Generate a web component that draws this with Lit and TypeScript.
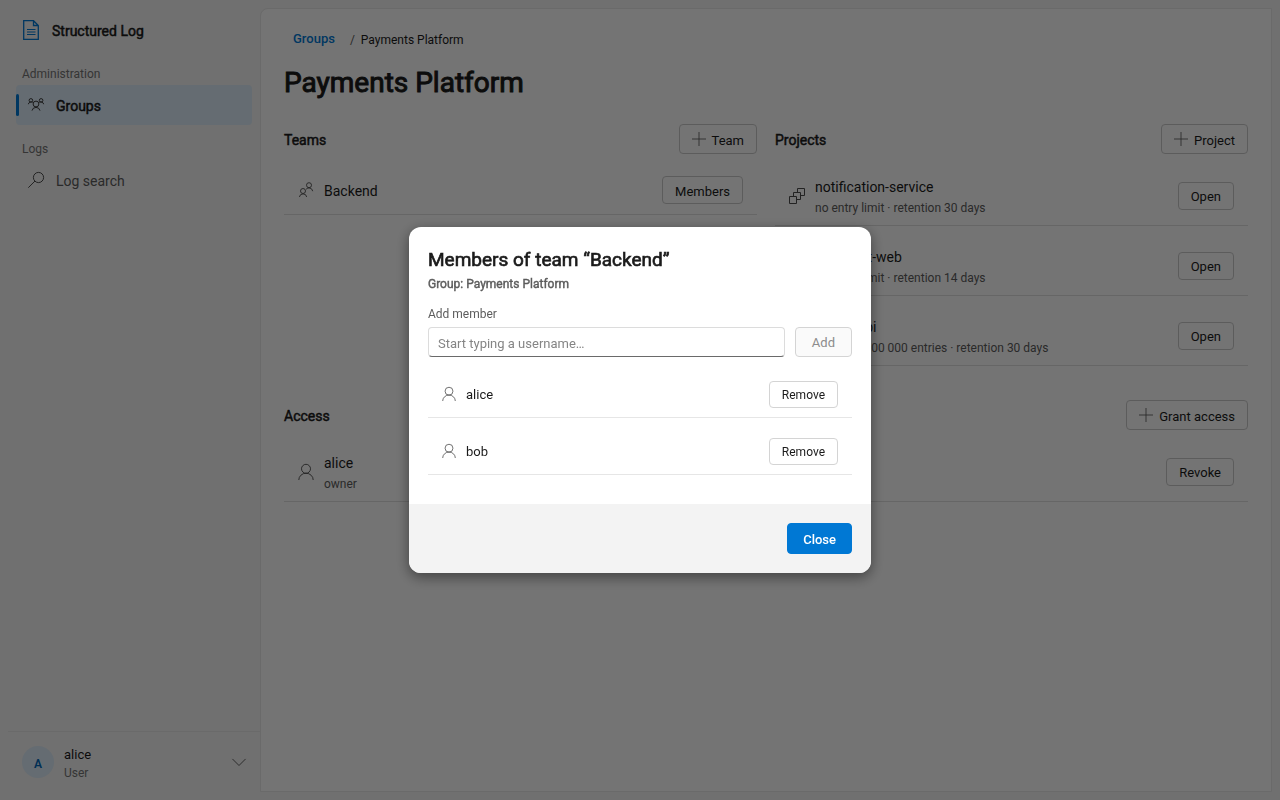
import { LitElement, html, css, svg, nothing } from "lit";
import { customElement, state } from "lit/decorators.js";

const line = (size: number, body: unknown) =>
  html`<svg width=${size} height=${size} viewBox="0 0 16 16" fill="none" stroke="currentColor" stroke-width="0.9" aria-hidden="true">${body}</svg>`;

const person = (size: number) =>
  line(size, svg`<circle cx="8" cy="4.800" r="4.500"/><path d="M.8 16a7.200 6.800 0 0 1 14.400 0"/>`);
const plus = () => line(14, svg`<path d="M8 0v16M0 8h16"/>`);
const people = () =>
  line(16, svg`<circle cx="11" cy="3.200" r="2.500"/><circle cx="5" cy="9" r="2.500"/><path d="M1.400 15a3.700 3.700 0 0 1 7.300 0M8.100 7.200a3.800 3.800 0 0 1 6.600 2"/>`);
const group = () =>
  line(16, svg`<g stroke-width="1"><circle cx="8" cy="7" r="2.900"/><path d="M4 13.600a4.100 4.100 0 0 1 8 0M.4 7.200a2.600 2.600 0 0 1 4.200-1.800M15.600 7.200a2.600 2.600 0 0 0-4.200-1.800"/><circle cx="2.900" cy="3.400" r="1.800"/><circle cx="13.100" cy="3.400" r="1.800"/></g>`);
const search = () => line(16, svg`<circle cx="10.500" cy="5.500" r="5.100"/><path d="M7 9L.3 15.700"/>`);
const blocks = () =>
  line(16, svg`<path stroke-width="1" d="M.5 8.500h7v7h-7zM4.500 8.500v-4h7v7h-4M8.500 4.500v-4h7v7h-4"/>`);
const chevron = () => line(14, svg`<path d="M.5 4.500L8 12l7.500-7.500"/>`);
const documentIcon = () =>
  html`<svg width="16" height="20" viewBox="0 0 16 20" fill="none" stroke="currentColor" aria-hidden="true">
    <path d="M.7 .7H10.5L15.3 5.5V19.3H.7zM10.5 .7V5.5H15.3" stroke-width="1.3"/><path d="M4 9.5h8.5M4 12h8.5M4 14.5h8.5" stroke-width="1.2"/></svg>`;

@customElement("app-root")
export class AppRoot extends LitElement {
  @state() private query = "";
  @state() private open = true;
  @state() private members = ["alice", "bob"];

  private projects = [
    { name: "notification-service", note: "no entry limit · retention 30 days" },
    { name: "checkout-web", note: "no entry limit · retention 14 days" },
    { name: "ledger-api", note: "limit 100 000 000 entries · retention 30 days" },
  ];

  static styles = css`
    :host {
      display: block;
      min-height: 100vh;
      font: 14px/20px Roboto, sans-serif;
      color: #1b1b1b;
      background: #f3f3f3;
    }
    * { box-sizing: border-box; }
    svg { flex: none; display: block; overflow: visible; }
    h1, h2, h3, p, ul { margin: 0; padding: 0; font-weight: 400; }
    ul { list-style: none; }
    a { color: inherit; text-decoration: none; }
    .strong { -webkit-text-stroke: 0.035em currentColor; }
    .shell { display: grid; grid-template-columns: 260px minmax(0, 1fr); min-height: 100vh; }
    .side { display: flex; flex-direction: column; padding: 0 0 8px 8px; }
    .brand { display: flex; align-items: center; gap: 13px; height: 50px; padding: 10px 15px 0; color: #0078d4; }
    .brand span { padding-top: 2px; color: #1b1b1b; }
    .label { padding: 16px 14px 3px; font-size: 12px; line-height: 16px; color: #757575; }
    .item { display: flex; align-items: center; gap: 12px; height: 40px; margin: 0 8px; padding: 0 12px; color: #5c5c5c; border-radius: 4px; position: relative; }
    .item.on { background: #dcebf8; color: #1b1b1b; }
    .item.on::before { content: ""; position: absolute; left: 0; top: 9px; width: 3px; height: 22px; border-radius: 2px; background: #0078d4; }
    .item span { padding-top: 2px; }
    .item svg { color: #3c3c3c; }
    .user { display: flex; align-items: center; gap: 10px; width: 100%; margin-top: auto; padding: 10px 14px; border: 0; border-top: 1px solid #e6e6e6; background: none; font: inherit; color: #3c3c3c; text-align: left; }
    .avatar { width: 32px; height: 32px; border-radius: 50%; background: #dcebf8; color: #0067b8; font-size: 12px; line-height: 36px; font-weight: 600; text-align: center; }
    .who { flex: 1; display: grid; padding-top: 4px; font-size: 13px; line-height: 18px; color: #1b1b1b; }
    .who small { font-size: 12px; color: #757575; }
    main { margin: 8px 8px 8px 0; padding: 23px; background: #fdfdfd; border: 1px solid #e6e6e6; border-radius: 8px 0 0 0; }
    .crumbs { display: flex; gap: 6px; padding-left: 9px; font-size: 12px; line-height: 16px; }
    .crumbs a { color: #0078d4; font-size: 13px; line-height: 14px; font-weight: 500; margin-right: 9px; }
    .crumbs i { font-style: normal; color: #5c5c5c; }
    h1 { font-size: 28px; line-height: 36px; margin: 17px 0 23px; }
    h3 { padding-top: 2px; font-size: 14px; }
    .cols { display: grid; grid-template-columns: 1fr 1fr; gap: 18px; }
    .head { display: flex; align-items: center; justify-content: space-between; height: 30px; margin-bottom: 12px; }
    .row { display: flex; align-items: center; min-height: 49px; padding: 10px 14px; margin-bottom: 10px; border-bottom: 1px solid #dedede; }
    .row.tall { min-height: 60px; padding: 8px 14px; }
    .row svg { color: #4c4c4c; }
    .text { flex: 1; padding: 2px 0 0 10px; }
    .text small { display: block; font-size: 12px; line-height: 16px; padding-top: 3px; color: #5c5c5c; }
    .text span { display: block; line-height: 20px; }
    .access { margin-top: 24px; }
    button { cursor: pointer; }
    .btn { display: flex; align-items: center; justify-content: center; gap: 6px; height: 28px; padding: 0 12px; font: 13px/18px Roboto, sans-serif; color: #1b1b1b; background: #fdfdfd; border: 1px solid #c9c9c9; border-radius: 4px; }
    .btn span { padding-top: 2px; }
    .head .btn { height: 30px; }
    main .btn span { padding-top: 4px; }
    main .tall .btn span { padding-top: 2px; }
    .btn svg { color: #4c4c4c; }
    .scrim { position: fixed; inset: 0; display: flex; align-items: center; justify-content: center; background: rgba(0, 0, 0, 0.54); }
    .dialog { width: 462px; max-width: 94vw; overflow: hidden; background: #fff; border-radius: 12px; box-shadow: 0 4px 14px rgba(0, 0, 0, 0.45); }
    .body { padding: 21px 19px 19px; }
    .body h2 { font-size: 19px; line-height: 24px; }
    .body p { margin-top: 4px; font-size: 12px; line-height: 16px; color: #5c5c5c; }
    .body label { display: block; margin: 14px 0 5px; font-size: 12px; line-height: 16px; color: #5c5c5c; }
    .add { display: flex; gap: 10px; margin-bottom: 14px; }
    input { flex: 1; min-width: 0; height: 30px; padding: 2px 9px 0; font: 13px/20px Roboto, sans-serif; color: #1b1b1b; border: 1px solid #dcdcdc; border-bottom-color: #6a6a6a; border-radius: 4px; outline: none; }
    input::placeholder { color: #858585; opacity: 1; }
    .add .btn { height: 30px; padding: 0 16px; }
    .btn:disabled { color: #8c8c8c; background: #fafafa; border-color: #d4d4d4; cursor: default; }
    .dialog .row { height: 47px; min-height: 0; font-size: 13px; border-color: #e6e6e6; }
    .dialog .row .btn { height: 27px; font-size: 12px; border-color: #d4d4d4; background: #fff; }
    .foot { display: flex; justify-content: flex-end; padding: 19px; background: #f3f3f3; }
    .foot .btn { height: 31px; padding: 0 15px; border-color: #0078d4; background: #0078d4; color: #fff; font-weight: 500; }
  `;

  private remove(name: string) {
    this.members = this.members.filter((m) => m !== name);
  }

  private add() {
    this.members = [...this.members, this.query.trim()];
    this.query = "";
  }

  private dialog() {
    return html`<div class="scrim">
      <section class="dialog" role="dialog" aria-modal="true" aria-labelledby="title">
        <div class="body">
          <h2 id="title" class="strong">Members of team “Backend”</h2>
          <p class="strong">Group: Payments Platform</p>
          <label for="member">Add member</label>
          <div class="add">
            <input id="member" placeholder="Start typing a username…" .value=${this.query}
              @input=${(e: Event) => (this.query = (e.target as HTMLInputElement).value)} />
            <button class="btn" ?disabled=${!this.query.trim()} @click=${this.add}><span>Add</span></button>
          </div>
          <ul>
            ${this.members.map((m) => html`<li class="row">
              ${person(14)}<div class="text"><span>${m}</span></div>
              <button class="btn" @click=${() => this.remove(m)}><span>Remove</span></button>
            </li>`)}
          </ul>
        </div>
        <div class="foot"><button class="btn" @click=${() => (this.open = false)}><span>Close</span></button></div>
      </section>
    </div>`;
  }

  render() {
    return html`
      <div class="shell">
        <nav class="side">
          <div class="brand">${documentIcon()}<span class="strong">Structured Log</span></div>
          <div class="label">Administration</div>
          <a class="item on" href="#groups">${group()}<span class="strong">Groups</span></a>
          <div class="label">Logs</div>
          <a class="item" href="#search">${search()}<span>Log search</span></a>
          <button class="user">
            <span class="avatar">A</span>
            <span class="who">alice<small>User</small></span>
            ${chevron()}
          </button>
        </nav>
        <main>
          <div class="crumbs"><a href="#groups">Groups</a><i>/</i><span>Payments Platform</span></div>
          <h1 class="strong">Payments Platform</h1>
          <div class="cols">
            <section>
              <div class="head"><h3 class="strong">Teams</h3><button class="btn">${plus()}<span>Team</span></button></div>
              <div class="row">${people()}<div class="text"><span>Backend</span></div><button class="btn"><span>Members</span></button></div>
            </section>
            <section>
              <div class="head"><h3 class="strong">Projects</h3><button class="btn">${plus()}<span>Project</span></button></div>
              ${this.projects.map((p) => html`<div class="row tall">
                ${blocks()}<div class="text"><span>${p.name}</span><small>${p.note}</small></div>
                <button class="btn"><span>Open</span></button>
              </div>`)}
            </section>
          </div>
          <section class="access">
            <div class="head"><h3 class="strong">Access</h3><button class="btn">${plus()}<span>Grant access</span></button></div>
            <div class="row tall">${person(16)}<div class="text"><span>alice</span><small>owner</small></div><button class="btn"><span>Revoke</span></button></div>
          </section>
        </main>
      </div>
      ${this.open ? this.dialog() : nothing}
    `;
  }
}
